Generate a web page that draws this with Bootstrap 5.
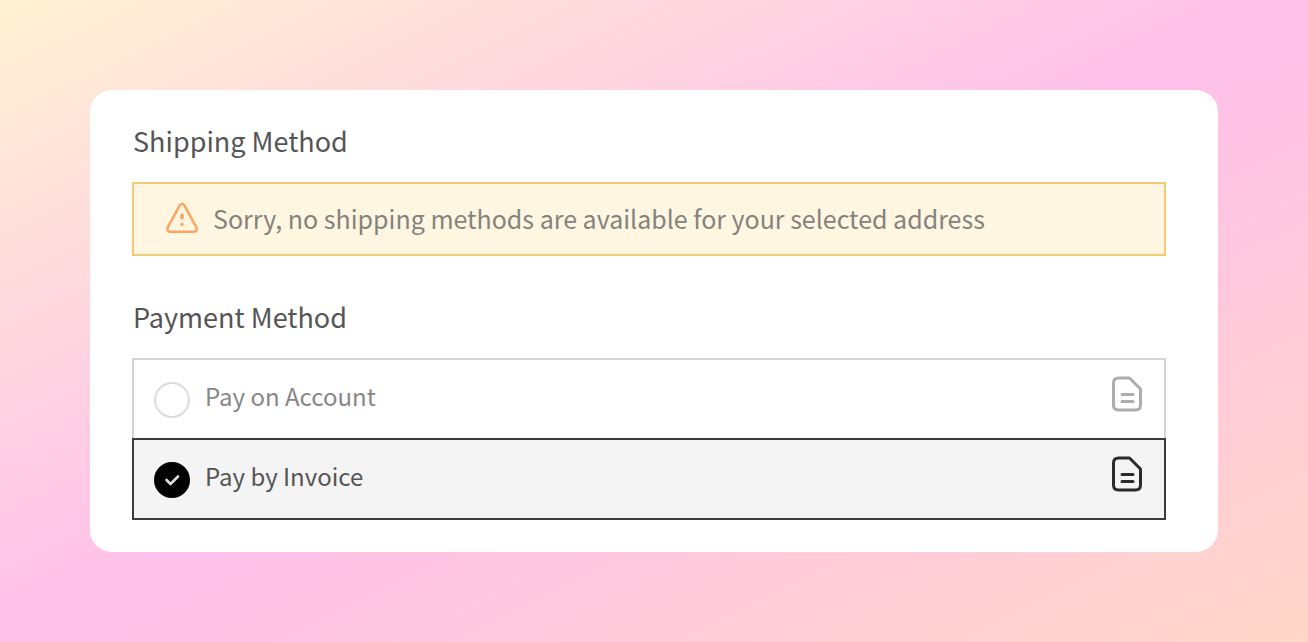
<!DOCTYPE html>
<html lang="en">
<head>
<meta charset="utf-8">
<meta name="viewport" content="width=device-width, initial-scale=1">
<title>Checkout</title>
<link href="https://cdn.jsdelivr.net/npm/bootstrap@5.3.0/dist/css/bootstrap.min.css" rel="stylesheet">
<style>
  body {
    font-family: "Noto Sans CJK SC", "Noto Sans", sans-serif;
    font-size: 24px;
    line-height: 36px;
    color: #555;
    background: linear-gradient(to bottom right, #fff2d3, #ffc0ea 50%, #ffd6c8);
    padding: 90px;
  }
  .checkout-panel {
    border-radius: 22px;
    padding: 32px 52px 32px 42px;
  }
  .section-title {
    font-size: 27px;
    line-height: 38px;
    font-weight: 400;
    margin: 0 0 22px 1px;
  }
  .notice {
    border: 2px solid #f1cc74;
    background: #fff6e2;
    color: #85827c;
    font-size: 25px;
    padding: 16px 32px 18px 31px;
    gap: 14px;
    margin-bottom: 42px;
  }
  .pay-option {
    border: 2px solid #d5d5d5;
    color: #878787;
    height: 82px;
    padding: 0 21px 0 20px;
    cursor: pointer;
  }
  .pay-option + .pay-option { margin-top: -2px; }
  .pay-option:has(:checked) {
    position: relative;
    border-color: #3c3c3c;
    background: #f4f4f4;
    color: #555;
  }
  .pay-option span { padding-bottom: 6px; }
  .pay-option .form-check-input {
    width: 36px;
    height: 36px;
    margin: 2px 15px 0 0;
    border: 2px solid #dcdcdc;
    box-shadow: none;
  }
  .pay-option .form-check-input:checked {
    background-color: #000;
    border-color: #000;
    background-size: 32px 32px;
    background-image: url("data:image/svg+xml,%3Csvg xmlns='http://www.w3.org/2000/svg' viewBox='0 0 32 32'%3E%3Cpath d='M10.500 16l4 4 7.500-7.500' fill='none' stroke='%23ddd' stroke-width='2.600' stroke-linecap='round' stroke-linejoin='round'/%3E%3C/svg%3E");
  }
  .doc-icon { color: #adadad; margin-bottom: 10px; }
  .pay-option:has(:checked) .doc-icon { color: #2b2b2b; }
</style>
</head>
<body>
<main class="checkout-panel bg-white">
  <h2 class="section-title">Shipping Method</h2>
  <div class="notice d-flex align-items-center" role="alert">
    <svg class="flex-shrink-0" width="34" height="32" viewBox="0 0 34 32" fill="none" stroke="#ffa45c" stroke-width="2.500" stroke-linecap="round" stroke-linejoin="round" aria-hidden="true">
      <path d="M14.500 3.700 2.700 25.400Q1.200 29.500 5 29.700H29Q32.800 29.500 31.300 25.400L19.500 3.700Q17-.200 14.500 3.700Z"/>
      <path d="M17 13.200v2.500" stroke-width="3.600"/><path d="M17 22.400h.01" stroke-width="3.400"/>
    </svg>
    <span>Sorry, no shipping methods are available for your selected address</span>
  </div>

  <h2 class="section-title" id="payment-title">Payment Method</h2>
  <div role="radiogroup" aria-labelledby="payment-title">
    <label class="pay-option d-flex align-items-center" for="pay-account">
      <input class="form-check-input flex-shrink-0" type="radio" name="payment" id="pay-account">
      <span class="flex-grow-1">Pay on Account</span>
      <svg class="doc-icon flex-shrink-0" width="32" height="36" viewBox="0 0 32 36" fill="none" stroke="currentColor" stroke-width="3" stroke-linecap="round" stroke-linejoin="round" aria-hidden="true">
        <path d="M7 2H18.500L29.500 13V29Q29.500 34 24.500 34H7.500Q2.500 34 2.500 29V7Q2.500 2 7.500 2Z"/><path d="M11 18.500H22M11 25.500H22"/>
      </svg>
    </label>
    <label class="pay-option d-flex align-items-center" for="pay-invoice">
      <input class="form-check-input flex-shrink-0" type="radio" name="payment" id="pay-invoice" checked>
      <span class="flex-grow-1">Pay by Invoice</span>
      <svg class="doc-icon flex-shrink-0" width="32" height="36" viewBox="0 0 32 36" fill="none" stroke="currentColor" stroke-width="3" stroke-linecap="round" stroke-linejoin="round" aria-hidden="true">
        <path d="M7 2H18.500L29.500 13V29Q29.500 34 24.500 34H7.500Q2.500 34 2.500 29V7Q2.500 2 7.500 2Z"/><path d="M11 18.500H22M11 25.500H22"/>
      </svg>
    </label>
  </div>
</main>
<script src="https://cdn.jsdelivr.net/npm/bootstrap@5.3.0/dist/js/bootstrap.bundle.min.js"></script>
</body>
</html>
